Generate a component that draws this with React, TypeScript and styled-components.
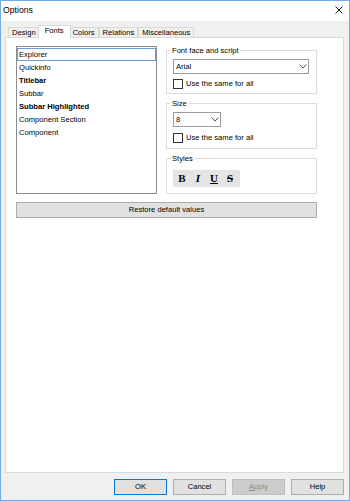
import React from 'react';
import styled, { createGlobalStyle, css } from 'styled-components';

const GlobalStyle = createGlobalStyle`
  html, body {
    margin: 0;
    padding: 0;
    background: #ffffff;
  }
  body {
    font-family: "Liberation Sans", Arial, sans-serif;
    font-size: 7.6px;
    color: #000;
  }
  * {
    box-sizing: border-box;
  }
`;

const Window = styled.div`
  width: 350px;
  height: 501px;
  border: 1px solid #74aae6;
  background: #f0f0f0;
  display: flex;
  flex-direction: column;
`;

const TitleBar = styled.div`
  height: 20px;
  background: #ffffff;
  display: flex;
  align-items: center;
  justify-content: space-between;
  padding: 0 6px 2px 2px;
`;

const Title = styled.span`
  font-size: 8.7px;
  line-height: 1;
`;

const Body = styled.div`
  flex: 1;
  display: flex;
  flex-direction: column;
  padding: 4px 5px 0 4px;
`;

const TabStrip = styled.div`
  display: flex;
  align-items: flex-end;
  height: 12px;
  padding-left: 3px;
`;

const Tab = styled.div<{ $active?: boolean }>`
  display: flex;
  align-items: center;
  position: relative;
  height: 10px;
  padding: 0 3px;
  line-height: 1;
  background: #f0f0f0;
  border: 1px solid #d9d9d9;
  border-bottom: none;
  white-space: nowrap;
  ${(p) =>
    p.$active &&
    css`
      height: 13px;
      margin: 0 -2px -1px;
      padding: 0 6px 2px;
      background: #ffffff;
      z-index: 1;
    `}
`;

const Panel = styled.div`
  height: 436px;
  background: #ffffff;
  border: 1px solid #d9d9d9;
  padding: 8px 0 0 10px;
`;

const Columns = styled.div`
  display: flex;
  gap: 9px;
`;

const ListBox = styled.div`
  width: 141px;
  height: 148px;
  border: 1px solid #8a8d94;
  padding: 1px 0;
`;

const ListItem = styled.div<{ $bold?: boolean; $focused?: boolean }>`
  height: 13px;
  line-height: 11px;
  padding-left: 1px;
  border: 1px solid ${(p) => (p.$focused ? '#6a9fd6' : 'transparent')};
  font-weight: ${(p) => (p.$bold ? 'bold' : 'normal')};
`;

const Side = styled.div`
  width: 151px;
  display: flex;
  flex-direction: column;
`;

const Group = styled.fieldset<{ $top: number; $bottom: number }>`
  margin: ${(p) => p.$top}px 0 0;
  padding: 0 6px ${(p) => p.$bottom}px;
  border: 1px solid #dcdcdc;
  min-width: 0;
`;

const Legend = styled.legend`
  padding: 0 1px;
  margin-left: -2px;
  line-height: 9px;
`;

const Combo = styled.div<{ $w: number }>`
  width: ${(p) => p.$w}px;
  height: 15px;
  margin-top: 4px;
  border: 1px solid #9b9b9b;
  background: #ffffff;
  display: flex;
  align-items: center;
  justify-content: space-between;
  padding: 0 1px 0 2px;
  line-height: 1;
`;

const CheckRow = styled.label<{ $top: number }>`
  display: flex;
  align-items: center;
  gap: 3px;
  height: 10px;
  margin-top: ${(p) => p.$top}px;
  line-height: 1;
`;

const CheckBox = styled.span`
  width: 10px;
  height: 10px;
  border: 1px solid #333333;
  background: #ffffff;
`;

const Toolbar = styled.div`
  width: 67px;
  height: 17px;
  margin-top: 7px;
  background: #e4e4e4;
  display: flex;
  align-items: center;
  padding-left: 1px;
`;

const StyleButton = styled.span<{ $italic?: boolean; $underline?: boolean; $strike?: boolean }>`
  width: 16px;
  text-align: center;
  font-family: "Liberation Serif", "Times New Roman", serif;
  font-weight: bold;
  font-size: 11px;
  line-height: 1;
  font-style: ${(p) => (p.$italic ? 'italic' : 'normal')};
  text-decoration: ${(p) =>
    p.$underline ? 'underline' : p.$strike ? 'line-through' : 'none'};
`;

const WideButton = styled.div`
  width: 301px;
  height: 16px;
  margin-top: 8px;
  background: #e1e1e1;
  border: 1px solid #adadad;
  display: flex;
  align-items: center;
  justify-content: center;
  line-height: 1;
`;

const ButtonRow = styled.div`
  display: flex;
  justify-content: flex-end;
  gap: 6px;
  margin-top: 6px;
`;

const DialogButton = styled.div<{ $default?: boolean; $disabled?: boolean }>`
  width: 53px;
  height: 16px;
  display: flex;
  align-items: center;
  justify-content: center;
  line-height: 1;
  background: ${(p) => (p.$disabled ? '#cccccc' : '#e1e1e1')};
  border: 1px solid
    ${(p) => (p.$default ? '#0078d7' : p.$disabled ? '#bfbfbf' : '#adadad')};
  color: ${(p) => (p.$disabled ? '#8a8a8a' : '#000')};
  u {
    text-decoration: underline;
  }
`;

const Chevron = () => (
  <svg width="8" height="5" viewBox="0 0 8 5">
    <path d="M0.5 0.5 L4 4 L7.5 0.5" fill="none" stroke="#555" strokeWidth="1" />
  </svg>
);

const CloseIcon = () => (
  <svg width="8" height="8" viewBox="0 0 8 8">
    <path d="M0.5 0.5 L7.5 7.5 M7.5 0.5 L0.5 7.5" stroke="#000" strokeWidth="0.9" />
  </svg>
);

const tabs = ['Design', 'Fonts', 'Colors', 'Relations', 'Miscellaneous'];

const fonts = [
  { label: 'Explorer', bold: false },
  { label: 'Quickinfo', bold: false },
  { label: 'Titlebar', bold: true },
  { label: 'Subbar', bold: false },
  { label: 'Subbar Highlighted', bold: true },
  { label: 'Component Section', bold: false },
  { label: 'Component', bold: false },
];

const App: React.FC = () => {
  return (
    <>
      <GlobalStyle />
      <Window>
        <TitleBar>
          <Title>Options</Title>
          <CloseIcon />
        </TitleBar>
        <Body>
          <TabStrip>
            {tabs.map((t) => (
              <Tab key={t} $active={t === 'Fonts'}>
                {t}
              </Tab>
            ))}
          </TabStrip>
          <Panel>
            <Columns>
              <ListBox>
                {fonts.map((f, i) => (
                  <ListItem key={f.label} $bold={f.bold} $focused={i === 0}>
                    {f.label}
                  </ListItem>
                ))}
              </ListBox>
              <Side>
                <Group $top={0} $bottom={4}>
                  <Legend>Font face and script</Legend>
                  <Combo $w={136}>
                    <span>Arial</span>
                    <Chevron />
                  </Combo>
                  <CheckRow $top={5}>
                    <CheckBox />
                    <span>Use the same for all</span>
                  </CheckRow>
                </Group>
                <Group $top={5} $bottom={5}>
                  <Legend>Size</Legend>
                  <Combo $w={48}>
                    <span>8</span>
                    <Chevron />
                  </Combo>
                  <CheckRow $top={6}>
                    <CheckBox />
                    <span>Use the same for all</span>
                  </CheckRow>
                </Group>
                <Group $top={5} $bottom={6}>
                  <Legend>Styles</Legend>
                  <Toolbar>
                    <StyleButton>B</StyleButton>
                    <StyleButton $italic>I</StyleButton>
                    <StyleButton $underline>U</StyleButton>
                    <StyleButton $strike>S</StyleButton>
                  </Toolbar>
                </Group>
              </Side>
            </Columns>
            <WideButton>Restore default values</WideButton>
          </Panel>
          <ButtonRow>
            <DialogButton $default>OK</DialogButton>
            <DialogButton>Cancel</DialogButton>
            <DialogButton $disabled>
              <span>
                <u>A</u>pply
              </span>
            </DialogButton>
            <DialogButton>Help</DialogButton>
          </ButtonRow>
        </Body>
      </Window>
    </>
  );
};

export default App;
